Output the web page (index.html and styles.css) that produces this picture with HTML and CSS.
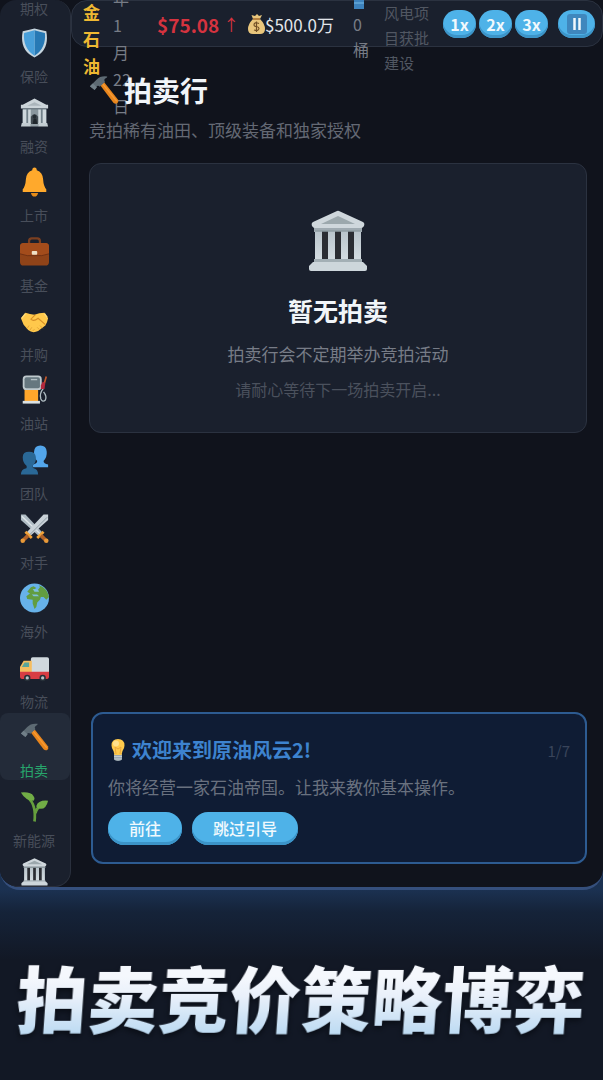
FILE: index.html
```html
<!DOCTYPE html>
<html lang="zh-CN">
<head>
  <meta charset="UTF-8">
  <meta name="viewport" content="width=device-width, initial-scale=1.0">
  <title>原油风云2 - 拍卖行</title>
  <link rel="stylesheet" href="styles.css">
</head>
<body>
  <svg class="sprite" aria-hidden="true">
    <linearGradient id="stone" x1="0" y1="0" x2="0" y2="1">
      <stop offset="0" stop-color="#b9c4cb"/><stop offset="1" stop-color="#d5dde2"/>
    </linearGradient>
    <symbol id="hammer" viewBox="0 0 32 32">
      <path d="M12 11 L16 7.500 L31 26.500 Q32 29 29.500 30.500 Q27.500 31 26 29.500 Z" fill="#e8851c"/>
      <path d="M14.500 9.500 L29.500 28" stroke="#f79b35" stroke-width="1.500"/>
      <path d="M1 12 L8 5 Q12 .5 19.500 1.500 Q20 2.500 17 4 Q15.500 5 17 7.500 L11.500 12.500 Q9.500 10.500 8 12.500 L6 16 Z" fill="#5d6a73"/>
      <path d="M1 12 L4 9 L8.500 13 L6 16 Z" fill="#717f88"/>
    </symbol>
    <symbol id="bank" viewBox="0 0 60 62">
      <path d="M6 17 H54 V22 H6 Z" fill="#9faab1"/>
      <path d="M29 1 Q30 .5 31 1 L55 12 Q57 13 56 16 Q55 18 53 18 H7 Q5 18 4 16 Q3 13 5 12 Z" fill="#cfd7dc"/>
      <path d="M30 6 L47 14 H13 Z" fill="#9ca8ad"/>
      <path d="M7 21 H53 V51 H7 Z" fill="#2b2d33"/>
      <path d="M7 21 H14 V51 H7 Z M20 21 H27 V51 H20 Z M33 21 H40 V51 H33 Z M46 21 H53 V51 H46 Z" fill="url(#stone)"/>
      <path d="M7 21 H53" stroke="#8f9ca3" stroke-width="1.500"/>
      <path d="M6 49 H54 V54 H6 Z" fill="#a3afb5"/>
      <path d="M5 52 H55 L59 56 V59 Q59 61 57 61 H3 Q1 61 1 59 V56 Z" fill="#cdd6db"/>
    </symbol>
  </svg>

  <div class="screen">
    <nav class="sidebar">
      <a href="#" class="nav-item nav-first"><span>期权</span></a>
      <a href="#" class="nav-item">
        <svg viewBox="0 0 32 32"><path d="M16 0 Q23 2 29 3 Q33 24 16 32 Q-1 24 3 3 Q9 2 16 0Z" fill="#c5d5df"/><path d="M16 2 Q22 4 27.500 5 Q29 22 16 30Z" fill="#2779b5"/><path d="M16 2 Q10 4 4.500 5 Q3 22 16 30Z" fill="#489fda"/></svg>
        <span>保险</span>
      </a>
      <a href="#" class="nav-item">
        <svg viewBox="0 0 32 32"><path d="M16 0 L29 7 H31 V11 H1 V7 H3Z" fill="#cbd4d9"/><path d="M16 4 L24 8 H8Z" fill="#aab5bb"/><path d="M3 11 H29 V28 H3Z" fill="#718089"/><path d="M3 12 H7 V28 H3Z M9 12 H12 V28 H9Z M20 12 H23 V28 H20Z M25 12 H29 V28 H25Z" fill="#ced7dc"/><path d="M12 28 V12 H20 V28Z" fill="#8a979e"/><path d="M12 28 V20 Q16 14 20 20 V28Z" fill="#414a51"/><circle cx="16" cy="20" r="2" fill="#242c32"/><path d="M14 28 L15 22 H18 L19 28Z" fill="#20272d"/><path d="M2 27 H12 V31 H1Z M20 27 H30 L31 31 H20Z" fill="#c3cdd2"/><path d="M12 28 H20 V31 H12Z" fill="#96a2a9"/></svg>
        <span>融资</span>
      </a>
      <a href="#" class="nav-item">
        <svg viewBox="0 0 32 32"><path d="M12 28 H20 Q19 32 16 32 Q13 32 12 28Z" fill="#e58b18"/><path d="M16 0 Q18.500 0 18.500 3 Q25 5 25.500 13 Q26 21 29 24 V27 H3 V24 Q6 21 6.500 13 Q7 5 13.500 3 Q13.500 0 16 0Z" fill="#ffa92c"/></svg>
        <span>上市</span>
      </a>
      <a href="#" class="nav-item">
        <svg viewBox="0 0 32 32"><path d="M10 7 V4 Q10 1 13 1 H19 Q22 1 22 4 V7" fill="none" stroke="#7b3f20" stroke-width="2.500"/><rect x="0" y="6" width="32" height="25" rx="4" fill="#8f4318"/><path d="M0 18 Q8 21 16 20 Q24 21 32 18 V10 Q32 6 28 6 H4 Q0 6 0 10Z" fill="#a34c1b"/><path d="M0 18 Q8 21 16 20 Q24 21 32 18" fill="none" stroke="#6d3012"/><rect x="13" y="15" width="6" height="4" rx="1" fill="#efe1c5"/></svg>
        <span>基金</span>
      </a>
      <a href="#" class="nav-item">
        <svg viewBox="0 0 32 32"><path d="M1 13 L6 7 Q11 9 16 9 Q21 7 27 7 L31 13 Q30 18 28 21 L20 27 Q14 30 9 26 L4 20Z" fill="#ffc84b"/><path d="M17 9 L12 14 Q15 17 20 13 L28 20" fill="none" stroke="#d58d25" stroke-width="1.200"/><path d="M8 24 L10 21 M11 26 L13 23 M14 27 L16 25 M22 21 L25 24 M19 23 L22 26" stroke="#e0a035"/><path d="M2 13 L6 8 M27 8 L30 12" stroke="#ffdb78" stroke-width="1.500"/></svg>
        <span>并购</span>
      </a>
      <a href="#" class="nav-item">
        <svg viewBox="0 0 32 32"><path d="M5 15 H20 V29 H5Z" fill="#ffa62b"/><rect x="3" y="0" width="21" height="16" rx="4" fill="#bfc9cd"/><rect x="5" y="2" width="17" height="12" rx="2" fill="#66777f"/><path d="M12 4.500 H19" stroke="#b3c0c5" stroke-width="1.500"/><path d="M3 28 H22 V31 H3Z" fill="#dae0e2"/><path d="M26 14 Q21 20 23 26 Q25 30 28 27 Q30 23 26 18" fill="none" stroke="#aebbc0" stroke-width="1.500"/><path d="M25 7 L28 8 L27 15 H23 V11Z" fill="#b3293d"/><path d="M27 8 L29 1" stroke="#c7592c" stroke-width="1.800"/></svg>
        <span>油站</span>
      </a>
      <a href="#" class="nav-item">
        <svg viewBox="0 0 32 32"><path d="M14 24 V21 Q19 20 19 17 Q15 14 15.500 7 Q16 0 22.500 0 Q29 0 29.500 7 Q30 13 26 17 Q26 20 31 21 V24Z" fill="#53a6eb"/><path d="M1 32 Q1 26 7 25 Q8 24 7 22 Q3 19 3 13 Q3 7 10 7 Q17 7 17.500 13 Q18 19 14 22 Q13 24 15 25 Q20 26 20 32Z" fill="#2a6896"/></svg>
        <span>团队</span>
      </a>
      <a href="#" class="nav-item">
        <svg viewBox="0 0 32 32"><path d="M1 0 H6 L25 20 L21 24 L1 6Z" fill="#aebbc3"/><path d="M2 2 L23 22" stroke="#dfe6ea" stroke-width="1.500"/><path d="M31 0 H26 L7 20 L11 24 L31 6Z" fill="#c8d1d7"/><path d="M30 3 L10 23" stroke="#87959e"/><path d="M6 19 L13 26 M26 19 L19 26" stroke="#f1a33a" stroke-width="3"/><path d="M9 23 L3 29 M23 23 L29 29" stroke="#b26329" stroke-width="4"/><circle cx="3" cy="29" r="2.500" fill="#e99a39"/><circle cx="29" cy="29" r="2.500" fill="#e99a39"/></svg>
        <span>对手</span>
      </a>
      <a href="#" class="nav-item">
        <svg viewBox="0 0 32 32"><circle cx="16" cy="16" r="16" fill="#67b2e9"/><path d="M8 9 L12 4 L15 3 L18 5 L15 7 L19 8 L22 4 L21 2 Q30 5 32 15 L29 18 L26 15 L23 15 L22 18 L19 21 L18 26 L16 28 L14 22 L14 18 L8 17 L7 14 L11 11Z" fill="#629d40"/><path d="M14 6 L20 7 L21 9 L16 9Z M13 12 L19 12 L21 14 L15 14Z" fill="#7fc0db"/></svg>
        <span>海外</span>
      </a>
      <a href="#" class="nav-item">
        <svg viewBox="0 0 32 32"><path d="M12 6 Q12 4 14 4 H30 Q32 4 32 6 V21 H12Z" fill="#d0d8dd"/><path d="M0 22 V15 L4 8 H13 V22Z" fill="#f6bd60"/><path d="M2 15 L5 10 H10 V15Z" fill="#5aa59a"/><path d="M0 20 H32 V26 Q32 28 30 28 H2 Q0 28 0 26Z" fill="#d73c43"/><circle cx="8" cy="27" r="3.500" fill="#273039"/><circle cx="8" cy="27" r="1.800" fill="#b6c1c6"/><circle cx="25" cy="27" r="3.500" fill="#273039"/><circle cx="25" cy="27" r="1.800" fill="#b6c1c6"/></svg>
        <span>物流</span>
      </a>
      <a href="#" class="nav-item active">
        <svg><use href="#hammer"/></svg>
        <span>拍卖</span>
      </a>
      <a href="#" class="nav-item">
        <svg viewBox="0 0 32 32"><path d="M16 32 Q17 23 15.500 17 Q14 10 8 5 M17 23 Q18 17 24 14" fill="none" stroke="#659e3d" stroke-width="3"/><path d="M1 0 Q12 -1 15 4 Q17 7 15 9 Q6 9 1 0Z" fill="#71ad46"/><path d="M31 9 Q29 18 23 18 Q18 18 18 15 Q20 8 31 9Z" fill="#71ad46"/></svg>
        <span>新能源</span>
      </a>
      <a href="#" class="nav-item nav-last" aria-label="更多">
        <svg><use href="#bank"/></svg>
      </a>
    </nav>

    <div class="content">
      <header class="topbar">
        <div class="logo">金石油</div>
        <div class="date">年<br>1<br>月<br>22<br>日</div>
        <div class="price">$75.08 <span>↑</span></div>
        <div class="money">
          <svg viewBox="0 0 17 20"><path d="M5 5 L3.500 1 L7 2 L9 0 L11 2 L14 1 L12 5 Q17 10 17 15 Q17 20 12 20 H5 Q0 20 0 15 Q0 10 5 5Z" fill="#e9c67c"/><path d="M5 5 H12" stroke="#a56b2e" stroke-width="1.500"/><path d="M11 9.500 Q6 7.500 6 11 Q6 12.500 8.500 12.500 Q11 13 11 14.500 Q10.500 17.500 6 16 M8.500 7.500 V18" fill="none" stroke="#735126" stroke-width="1.200"/></svg>
          <span>$500.0万</span>
        </div>
        <div class="stock">
          <svg viewBox="0 0 12 16"><rect x="1" width="10" height="16" fill="#3d82bd"/><path d="M1 10 H11" stroke="#5a9fd2" stroke-width="2"/></svg>
          0<br>桶
        </div>
        <div class="news">风电项目获批建设</div>
        <div class="speed">
          <button type="button">1x</button>
          <button type="button">2x</button>
          <button type="button">3x</button>
        </div>
        <button type="button" class="pause" aria-label="暂停">
          <svg viewBox="0 0 20 20"><rect width="20" height="20" rx="3" fill="#3f87bd"/><path d="M7.500 4 V16 M12.500 4 V16" stroke="#f0f8fc" stroke-width="2.500"/></svg>
        </button>
      </header>

      <main>
        <h1><svg><use href="#hammer"/></svg>拍卖行</h1>
        <p class="subtitle">竞拍稀有油田、顶级装备和独家授权</p>

        <section class="empty-card">
          <svg><use href="#bank"/></svg>
          <h2>暂无拍卖</h2>
          <p>拍卖行会不定期举办竞拍活动</p>
          <p class="hint">请耐心等待下一场拍卖开启...</p>
        </section>

        <section class="guide">
          <div class="guide-head">
            <svg viewBox="0 0 20 24"><path d="M6 16 H14 V20 Q14 23 10 23 Q6 23 6 20Z" fill="#9ca9b1"/><path d="M6 18.500 H14 M6 21 H14" stroke="#c3ccd1"/><path d="M10 1 Q16.500 1 16.500 7.500 Q16.500 10 14.500 13 L13.500 17 H6.500 L5.500 13 Q3.500 10 3.500 7.500 Q3.500 1 10 1Z" fill="#ffca4c"/><path d="M8 16 L7 9 L10 11 L13 9 L12 16" fill="none" stroke="#eba63d"/><ellipse cx="8" cy="5.500" rx="3" ry="3" fill="#ffe08c"/></svg>
            <h3>欢迎来到原油风云2!</h3>
            <span class="step">1/7</span>
          </div>
          <p>你将经营一家石油帝国。让我来教你基本操作。</p>
          <div class="guide-actions">
            <button type="button">前往</button>
            <button type="button">跳过引导</button>
          </div>
        </section>
      </main>
    </div>
  </div>

  <footer class="caption"><span>拍卖竞价策略博弈</span></footer>
</body>
</html>
```

FILE: styles.css
```css
* {
  box-sizing: border-box;
}

body {
  margin: 0;
  height: 100vh;
  display: flex;
  flex-direction: column;
  overflow: hidden;
  background: #121825;
  color: #f1f5f9;
  font-family: "Noto Sans CJK SC", sans-serif;
}

h1, h2, h3, p {
  margin: 0;
}

.sprite {
  position: absolute;
  width: 0;
  height: 0;
}

/* game screen */
.screen {
  flex: 1;
  min-height: 0;
  position: relative;
  z-index: 1;
  display: flex;
  overflow: hidden;
  background: #10131c;
  border-bottom: 3px solid #354f7c;
  border-radius: 0 0 20px 20px;
}

/* sidebar */
.sidebar {
  flex: none;
  width: 71px;
  display: flex;
  flex-direction: column;
  justify-content: space-between;
  overflow: hidden;
  background: #1a202d;
  border: 1px solid #2a303d;
  border-width: 0 1px 1px 0;
  border-radius: 16px;
}

.nav-item {
  flex: none;
  height: 67px;
  padding: 9px 2px 0 0;
  display: flex;
  flex-direction: column;
  align-items: center;
  gap: 9px;
  border-radius: 8px;
  color: #484e5a;
  font-size: 14px;
  line-height: 18px;
  text-decoration: none;
}

.nav-item svg {
  width: 29px;
  height: 30px;
}

.nav-item.active {
  background: #232b39;
  color: #27a56c;
}

.nav-first {
  height: 17px;
  padding-top: 0;
  line-height: 16px;
}

.nav-last {
  height: 34px;
  padding-top: 6px;
}

.content {
  flex: 1;
  min-width: 0;
  display: flex;
  flex-direction: column;
}

/* top status bar */
.topbar {
  flex: none;
  height: 47px;
  padding: 0 7px 0 11px;
  display: flex;
  align-items: flex-start;
  gap: 12px;
  background: #1a202d;
  border: 1px solid #2b3240;
  border-radius: 16px;
  color: #777c86;
  font-size: 16px;
  line-height: 27px;
}

.logo {
  width: 18px;
  margin-top: -3px;
  color: #efb832;
  font-size: 17px;
  font-weight: bold;
}

.date {
  width: 32px;
  margin-top: -16px;
}

.price,
.money {
  display: flex;
  align-items: center;
  height: 46px;
  white-space: nowrap;
}

.price {
  gap: 4px;
  width: 79px;
  color: #d5333f;
  font-size: 19px;
  font-weight: bold;
}

.price span {
  font-size: 16px;
  font-weight: normal;
}

.money {
  color: #e2e5ea;
  font-size: 17px;
}

.money svg {
  width: 17px;
  height: 20px;
}

.stock {
  width: 26px;
  padding-left: 7px;
  line-height: 25px;
}

.stock svg {
  display: block;
  width: 12px;
  height: 16px;
  margin-top: -8px;
  margin-bottom: 3px;
}

.news {
  flex: 1;
  min-width: 45px;
  margin-top: -1px;
  color: #515762;
  font-size: 15px;
  line-height: 25px;
}

.speed {
  display: flex;
  gap: 3px;
}

button {
  border: 0;
  border-radius: 16px;
  background: #4eb2e8;
  box-shadow: inset 0 -3px 0 #3c94c8;
  color: #f1f9fd;
  font-family: inherit;
  cursor: pointer;
}

.topbar button {
  width: 33px;
  height: 28px;
  margin-top: 9px;
  padding: 0;
  font-size: 16px;
  font-weight: bold;
  line-height: 28px;
}

.topbar .pause {
  width: 37px;
  margin-left: -2px;
}

.pause svg {
  display: block;
  width: 20px;
  height: 20px;
  margin: 0 auto;
}

/* auction page */
main {
  flex: 1;
  padding: 23px 16px 23px 18px;
  display: flex;
  flex-direction: column;
}

h1 {
  position: relative;
  display: flex;
  align-items: center;
  gap: 5px;
  font-size: 28px;
  line-height: 40px;
}

h1 svg {
  width: 30px;
  height: 30px;
}

.subtitle {
  margin-top: 7px;
  color: #646974;
  font-size: 17px;
  line-height: 26px;
}

.empty-card {
  margin-top: 20px;
  padding: 46px 16px 30px;
  display: flex;
  flex-direction: column;
  align-items: center;
  background: #1a202d;
  border: 1px solid #2b3240;
  border-radius: 12px;
  color: #777c87;
  font-size: 17px;
  line-height: 26px;
}

.empty-card svg {
  width: 60px;
  height: 62px;
}

.empty-card h2 {
  margin: 20px 0 13px;
  color: #f1f5f9;
  font-size: 25px;
  line-height: 36px;
}

.empty-card .hint {
  margin-top: 9px;
  color: #4b515d;
  font-size: 16px;
}

/* tutorial box */
.guide {
  margin-top: auto;
  margin-left: 2px;
  padding: 22px 15px 17px;
  background: #0f1c34;
  border: 2px solid #2d5b91;
  border-radius: 12px;
}

.guide-head {
  display: flex;
  align-items: center;
  gap: 4px;
}

.guide-head svg {
  width: 20px;
  height: 24px;
}

.guide-head h3 {
  flex: 1;
  color: #3d83cf;
  font-size: 20px;
  line-height: 28px;
}

.step {
  color: #39445a;
  font-size: 15px;
}

.guide p {
  margin: 10px 0 12px;
  color: #69717f;
  font-size: 17px;
  line-height: 26px;
}

.guide-actions {
  display: flex;
  gap: 10px;
}

.guide-actions button {
  height: 33px;
  padding: 0 21px 2px;
  font-size: 16px;
  font-weight: 500;
}

/* promo caption */
.caption {
  flex: none;
  height: 210px;
  margin-top: -20px;
  padding-top: 76px;
  background: linear-gradient(#1b3151 20px, #152339 42px, #121825 90px);
  text-align: center;
  font-size: 71px;
  font-weight: 900;
  line-height: 100px;
  white-space: nowrap;
}

.caption span {
  display: inline-block;
  background: linear-gradient(#f5f8fd 30px, #e9f0fa 50px, #bfdcf3 86px);
  -webkit-background-clip: text;
  background-clip: text;
  color: transparent;
  filter: drop-shadow(0 3px 3px #080c14);
  transform: skewX(-4deg);
}
```
